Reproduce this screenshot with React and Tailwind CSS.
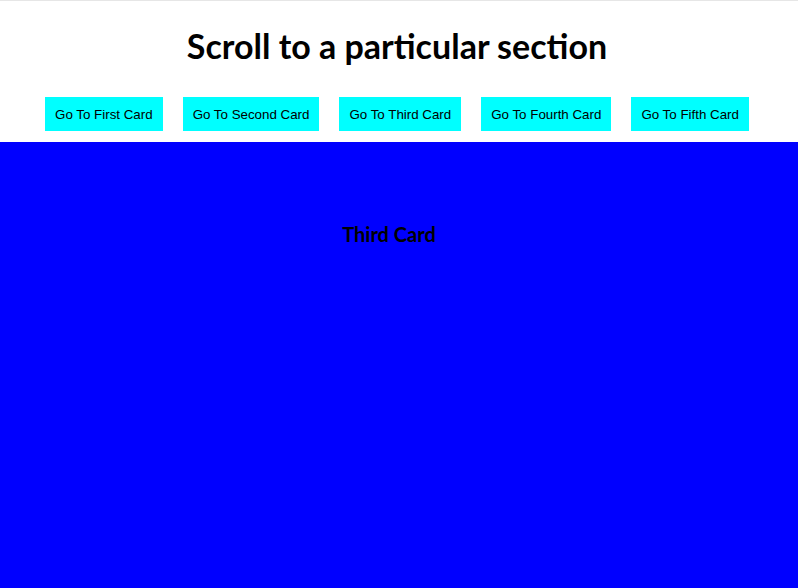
import React from 'react';

const buttons = ['First', 'Second', 'Third', 'Fourth', 'Fifth'];

const App = () => {
  return (
    <div className="w-[798px] h-[588px] overflow-hidden bg-white border-t border-[#e6e6e6]">
      <h1 className="text-center text-[34px] font-bold leading-[40px] pt-[25px] pr-[4px] text-black font-['Lato',sans-serif]">
        Scroll to a particular section
      </h1>
      <div className="flex justify-center gap-[20px] mt-[31px] pr-[4px]">
        {buttons.map((b) => (
          <button
            key={b}
            className="h-[34px] px-[10px] pt-[2px] bg-[#00ffff] text-[13.33px] text-black font-['Liberation_Sans',Arial,sans-serif]"
          >
            Go To {b} Card
          </button>
        ))}
      </div>
      <div className="mt-[11px] h-[500px] bg-[#0000ff] pt-[77px] pr-[20px]">
        <h2 className="text-center text-[20px] font-bold text-black font-['Lato',sans-serif]">
          Third Card
        </h2>
      </div>
    </div>
  );
};

export default App;
